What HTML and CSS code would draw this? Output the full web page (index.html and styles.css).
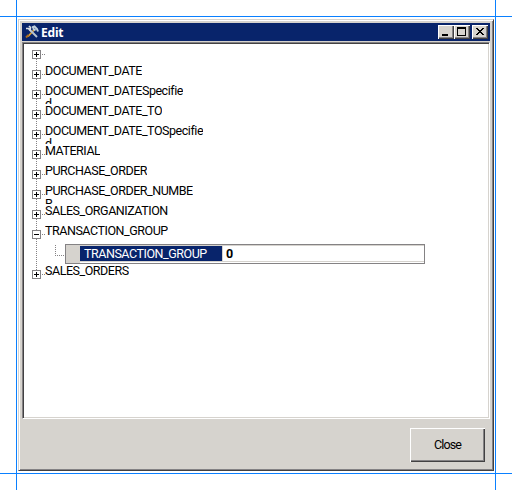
FILE: index.html
```html
<!DOCTYPE html>
<html lang="en">
<head>
<meta charset="utf-8">
<title>Edit</title>
<link rel="stylesheet" href="styles.css">
</head>
<body>
<div class="guide guide-top"></div><div class="guide guide-bottom"></div>
<div class="guide guide-left"></div><div class="guide guide-right"></div>
<div class="window">
  <div class="titlebar">
    <svg class="app-icon" width="14" height="14" viewBox="0 0 14 14" fill="none">
      <path d="M3 11.5 9 5" stroke="#e0a030" stroke-width="1.8"/>
      <path d="M1 12.5 3.5 10" stroke="#a86b20" stroke-width="2"/>
      <path d="M4 4 12 12" stroke="#b8c4d0" stroke-width="2"/>
      <path d="M1 3.5h2.5L5 5 5.5 2.5 4 1" stroke="#d8dde2" stroke-width="1.7"/>
      <path d="M7 2.5 9.5 1.5 12 4l1 2.5M8 3.5 10.5 5.5" stroke="#c0d0dc" stroke-width="2"/>
    </svg>
    <span class="title">Edit</span>
    <span class="caption">
      <svg viewBox="0 0 16 14"><path d="M4 9h6v2H4z"/></svg>
    </span>
    <span class="caption">
      <svg viewBox="0 0 16 14"><path fill-rule="evenodd" d="M3 2h9v9H3zM4 4v6h7V4z"/></svg>
    </span>
    <span class="caption caption-close">
      <svg viewBox="0 0 16 14"><path d="M4 3h2v1h1v1h2V4h1V3h2v1h-1v1h-1v1H9v1h1v1h1v1h1v1h-2V9H9V8H7v1H6v1H4V9h1V8h1V7h1V6H6V5H5V4H4z"/></svg>
    </span>
  </div>
  <div class="panel">
    <div class="row first"><i class="box plus"></i><i class="dots"></i></div>
    <div class="row"><i class="box plus"></i><i class="dots"></i><span class="label">DOCUMENT_DATE</span></div>
    <div class="row"><i class="box plus"></i><i class="dots"></i><span class="label">DOCUMENT_DATESpecifie<br>d</span></div>
    <div class="row"><i class="box plus"></i><i class="dots"></i><span class="label">DOCUMENT_DATE_TO</span></div>
    <div class="row"><i class="box plus"></i><i class="dots"></i><span class="label">DOCUMENT_DATE_TOSpecifie<br>d</span></div>
    <div class="row"><i class="box plus"></i><i class="dots"></i><span class="label">MATERIAL</span></div>
    <div class="row"><i class="box plus"></i><i class="dots"></i><span class="label">PURCHASE_ORDER</span></div>
    <div class="row"><i class="box plus"></i><i class="dots"></i><span class="label">PURCHASE_ORDER_NUMBE<br>R</span></div>
    <div class="row"><i class="box plus"></i><i class="dots"></i><span class="label">SALES_ORGANIZATION</span></div>
    <div class="row"><i class="box"></i><i class="dots"></i><span class="label">TRANSACTION_GROUP</span></div>
    <div class="row child"><i class="elbow"></i>
      <div class="field"><span class="name">TRANSACTION_GROUP</span><span class="value">0</span></div>
    </div>
    <div class="row"><i class="box plus"></i><i class="dots"></i><span class="label">SALES_ORDERS</span></div>
  </div>
  <div class="footer"><button class="close">Close</button></div>
</div>
</body>
</html>
```
FILE: styles.css
```css
* { box-sizing: border-box; }
body {
  margin: 0; width: 512px; height: 490px; padding: 19px 0 0 18px;
  overflow: hidden; background: #fff; color: #000;
  font: 12.5px/13px Roboto, "Liberation Sans", sans-serif;
}
.guide { position: absolute; background: #0a80ff; }
.guide-top, .guide-bottom { left: 0; width: 512px; height: 1px; }
.guide-left, .guide-right { top: 0; width: 1px; height: 490px; }
.guide-top { top: 16px; }
.guide-bottom { top: 473px; }
.guide-left { left: 16px; }
.guide-right { left: 495px; }
.window {
  width: 476px; height: 452px; padding: 3px; background: #d6d3ce;
  border: 1px solid; border-color: #d6d3ce #424142 #424142 #d6d3ce;
  box-shadow: inset 1px 1px #fff, inset -1px -1px #848284;
}
.titlebar {
  display: flex; align-items: center; height: 18px;
  padding: 0 2px; background: #08246b; color: #fff;
}
.app-icon { margin-left: 1px; }
.title { flex: 1; margin: 1px 0 0 2px; font: bold 12px/14px "Noto Sans", "DejaVu Sans", sans-serif; letter-spacing: -0.2px; }
.caption {
  width: 16px; height: 14px; background: #d6d3ce;
  box-shadow: inset 1px 1px #fff, inset -1px -1px #424142, inset -2px -2px #848284;
}
.caption svg { display: block; width: 16px; height: 14px; shape-rendering: crispEdges; }
.caption-close { margin-left: 2px; }
.panel {
  height: 377px; margin-top: 1px; padding: 2px 0 0 9px; background: #fff;
  border: 1px solid; border-color: #848284 #fff #fff #848284;
  box-shadow: inset 1px 1px #424142, inset -1px -1px #d6d3ce;
}
.row {
  display: flex; align-items: flex-start; height: 20px;
  background: repeating-linear-gradient(#848284 0 1px, transparent 1px 2px) 4px 0 / 1px 20px no-repeat;
}
.first { background-position: 4px 10px; }
.row:last-child { background-size: 1px 6px; }
.box {
  flex: none; width: 9px; height: 9px; margin-top: 5px; border: 1px solid #848284;
  background: linear-gradient(#000, #000) center / 5px 1px no-repeat #fff;
}
.plus {
  background: linear-gradient(#000, #000) center / 5px 1px no-repeat,
    linear-gradient(#000, #000) center / 1px 5px no-repeat #fff;
}
.dots {
  width: 3px; height: 1px; margin: 9px 0 0 1px;
  background: repeating-linear-gradient(90deg, #848284 0 1px, transparent 1px 2px);
}
.label { height: 20px; margin-top: -1px; overflow: hidden; white-space: nowrap; letter-spacing: -0.46px; }
.elbow {
  width: 9px; height: 11px; margin-left: 23px;
  background: repeating-linear-gradient(#848284 0 1px, transparent 1px 2px) 0 0 / 1px 11px no-repeat,
    repeating-linear-gradient(90deg, #848284 0 1px, transparent 1px 2px) 0 10px / 9px 1px no-repeat;
}
.field {
  display: flex; width: 360px; height: 20px; margin: -1px 0 0 1px;
  padding: 1px 0 2px; border: 1px solid #848284;
  background: linear-gradient(#d6d3ce, #d6d3ce) 0 0 / 14px 18px no-repeat,
    linear-gradient(#d6d3ce, #d6d3ce) 0 0 / 100% 1px no-repeat,
    linear-gradient(#d6d3ce, #d6d3ce) 0 16px / 100% 1px no-repeat #fff;
}
.name {
  width: 142px; height: 15px; margin-left: 14px; padding-left: 4px;
  background: #08246b; color: #fff; line-height: 15px; letter-spacing: -0.46px;
}
.value { padding-left: 3px; border-left: 1px solid #d6d3ce; font-weight: bold; line-height: 15px; }
.footer { display: flex; justify-content: flex-end; padding: 9px 5px 0 0; }
.close {
  width: 75px; height: 34px; padding: 0 0 2px; border: 0; border-radius: 0;
  background: #d6d3ce; color: #000; font: inherit; letter-spacing: -0.9px;
  box-shadow: inset 1px 1px #fff, inset -1px -1px #424142, inset -2px -2px #848284;
}
```
